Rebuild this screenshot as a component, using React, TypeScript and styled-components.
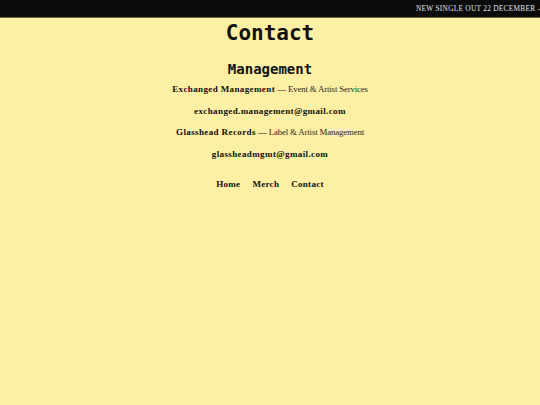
import styled, { createGlobalStyle } from 'styled-components'

const GlobalStyle = createGlobalStyle`
  html, body {
    margin: 0;
    padding: 0;
    background: #fdefa3;
  }
  body {
    font-family: 'Liberation Serif', serif;
    color: #111;
  }
`

const TopBar = styled.div`
  height: 17px;
  background: #0b0b0b;
  border-bottom: 1px solid #6b6440;
  overflow: hidden;
  white-space: nowrap;
  display: flex;
  align-items: center;
`

const Marquee = styled.div`
  padding-left: 416px;
  font-family: 'Liberation Serif', serif;
  font-size: 7.3px;
  letter-spacing: 0.3px;
  color: #e8e8e8;
  text-transform: uppercase;
`

const Main = styled.main`
  display: flex;
  flex-direction: column;
  align-items: center;
  text-align: center;
`

const Title = styled.h1`
  margin: 0;
  font-family: 'DejaVu Sans Mono', monospace;
  font-weight: bold;
  font-size: 21px;
  line-height: 30px;
`

const SubTitle = styled.h2`
  margin: 11px 0 0;
  font-family: 'DejaVu Sans Mono', monospace;
  font-weight: bold;
  font-size: 14px;
  line-height: 20px;
`

const Line = styled.p`
  margin: 0;
  font-size: 9px;
  line-height: 21.5px;
  strong {
    font-weight: bold;
    letter-spacing: 0.38px;
  }
`

const Light = styled.span`
  font-size: 8.8px;
  letter-spacing: -0.15px;
  color: #2a2a2a;
`

const Nav = styled.nav`
  display: flex;
  gap: 12px;
  margin-top: 14px;
  a {
    font-size: 9px;
    font-weight: bold;
    letter-spacing: 0.3px;
    color: #111;
    text-decoration: none;
  }
`

const contacts = [
  { name: 'Exchanged Management', desc: 'Event & Artist Services', email: 'exchanged.management@gmail.com' },
  { name: 'Glasshead Records', desc: 'Label & Artist Management', email: 'glassheadmgmt@gmail.com' }
]

export default function App() {
  return (
    <>
      <GlobalStyle />
      <TopBar>
        <Marquee>New single out 22 December — New single out 22 December</Marquee>
      </TopBar>
      <Main>
        <Title>Contact</Title>
        <SubTitle>Management</SubTitle>
        {contacts.map((c) => (
          <div key={c.name}>
            <Line>
              <strong>{c.name}</strong> <Light>— {c.desc}</Light>
            </Line>
            <Line>
              <strong>{c.email}</strong>
            </Line>
          </div>
        ))}
        <Nav>
          <a href='#'>Home</a>
          <a href='#'>Merch</a>
          <a href='#'>Contact</a>
        </Nav>
      </Main>
    </>
  )
}
